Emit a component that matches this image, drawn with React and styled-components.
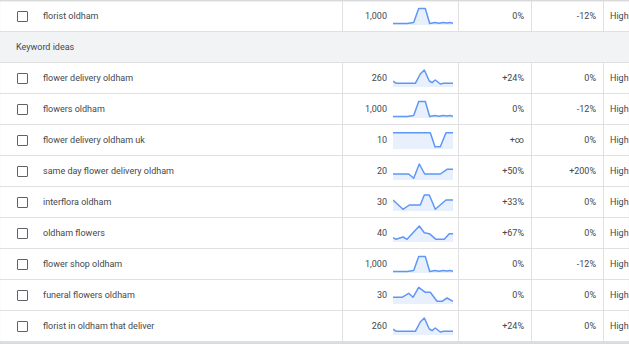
import React from 'react';
import styled, { createGlobalStyle } from 'styled-components';

const GlobalStyle = createGlobalStyle`
  html, body {
    margin: 0;
    padding: 0;
    background: #ffffff;
    overflow: hidden;
  }
  body {
    font-family: Roboto, "Liberation Sans", Arial, sans-serif;
    font-size: 9px;
    color: #44484c;
  }
`;

const Table = styled.div`
  width: 100%;
  background: #ffffff;
  padding-top: 1px;
  box-shadow: inset 0 2px 2px -1px rgba(60, 64, 67, 0.28);
  overflow: hidden;
`;

const Row = styled.div`
  display: grid;
  grid-template-columns: 342px 116px 73px 72px 1fr;
  height: 30px;
  border-bottom: 1px solid #e0e0e0;
`;

const Section = styled.div`
  height: 30px;
  display: flex;
  align-items: center;
  padding-left: 16px;
  background: #f1f3f4;
  border-bottom: 1px solid #e0e0e0;
`;

const Cell = styled.div`
  display: flex;
  align-items: center;
  box-sizing: border-box;
  border-left: ${p => (p.$first ? 'none' : '1px solid #e0e0e0')};
  justify-content: ${p => (p.$align === 'right' ? 'flex-end' : 'flex-start')};
  padding: ${p => p.$pad || '0'};
  gap: ${p => p.$gap || '0'};
  white-space: nowrap;
  overflow: hidden;
`;

const Check = styled.span`
  width: 11px;
  height: 11px;
  box-sizing: border-box;
  border: 1.5px solid #5f6368;
  border-radius: 1px;
  flex-shrink: 0;
`;

const Footer = styled.div`
  height: 3px;
  background: #dadce0;
`;

// sparkline points, 60x18 box
const A = [[0,16.5],[14,16.5],[20.7,15.5],[25.7,1.5],[32.3,1.5],[36.7,16.5],[42,15.6],[46,16.3],[50,15.6],[54,16.1],[57,15.5],[60,16.3]];
const B = [[0,12],[3.3,14.3],[22.3,14.3],[27.3,5],[31.3,1],[36.3,12],[39,13.7],[42.3,11],[47.3,15],[50.7,14.3],[60,14.3]];
const C = [[0,1.7],[37.3,1.7],[42,15.7],[47.3,15.7],[53,1.7],[60,1.7]];
const D = [[0,12],[15.7,12],[20.7,16.3],[26.3,2],[31.7,12],[47.3,12],[54,7.3],[60,7.3]];
const E = [[0,7],[10,16.3],[16.3,12],[27.3,12],[31.3,2],[36.3,2],[42.3,16.3],[53,7],[60,7]];
const F = [[0,13.7],[3,15.3],[10,13],[14,15.3],[26.3,2],[31.3,8.7],[36.3,9.7],[43,15.3],[51.3,15.3],[56.3,9.7],[60,9.7]];
const G = [[0,11.3],[9,11.3],[15.7,7.3],[20,11.3],[25.7,1.3],[32.3,6.3],[37.3,6.3],[44,15.3],[49,15.3],[54,12],[60,15.3]];

const Spark = ({ pts }) => {
  const line = pts.map(p => p.join(',')).join(' ');
  const area = `0,18 ${line} 60,18`;
  return (
    <svg width="60" height="18" viewBox="0 0 60 18">
      <polygon points={area} fill="#e8f0fe" />
      <polyline points={line} fill="none" stroke="#5e97f6" strokeWidth="1.5" strokeLinejoin="round" />
    </svg>
  );
};

const rows = [
  { kw: 'florist oldham', vol: '1,000', spark: A, three: '0%', yoy: '-12%' },
  { section: 'Keyword ideas' },
  { kw: 'flower delivery oldham', vol: '260', spark: B, three: '+24%', yoy: '0%' },
  { kw: 'flowers oldham', vol: '1,000', spark: A, three: '0%', yoy: '-12%' },
  { kw: 'flower delivery oldham uk', vol: '10', spark: C, three: '+∞', yoy: '0%' },
  { kw: 'same day flower delivery oldham', vol: '20', spark: D, three: '+50%', yoy: '+200%' },
  { kw: 'interflora oldham', vol: '30', spark: E, three: '+33%', yoy: '0%' },
  { kw: 'oldham flowers', vol: '40', spark: F, three: '+67%', yoy: '0%' },
  { kw: 'flower shop oldham', vol: '1,000', spark: A, three: '0%', yoy: '-12%' },
  { kw: 'funeral flowers oldham', vol: '30', spark: G, three: '0%', yoy: '0%' },
  { kw: 'florist in oldham that deliver', vol: '260', spark: B, three: '+24%', yoy: '0%' },
];

export default function App() {
  return (
    <>
      <GlobalStyle />
      <Table>
        {rows.map((r, i) =>
          r.section ? (
            <Section key={i}>{r.section}</Section>
          ) : (
            <Row key={i}>
              <Cell $first $pad="0 0 0 17px" $gap="15px">
                <Check />
                {r.kw}
              </Cell>
              <Cell $align="right" $pad="0 5px 0 0" $gap="6px">
                {r.vol}
                <Spark pts={r.spark} />
              </Cell>
              <Cell $align="right" $pad="0 7px 0 0">{r.three}</Cell>
              <Cell $align="right" $pad="0 7px 0 0">{r.yoy}</Cell>
              <Cell $pad="0 0 0 6px">High</Cell>
            </Row>
          )
        )}
        <Footer />
      </Table>
    </>
  );
}
